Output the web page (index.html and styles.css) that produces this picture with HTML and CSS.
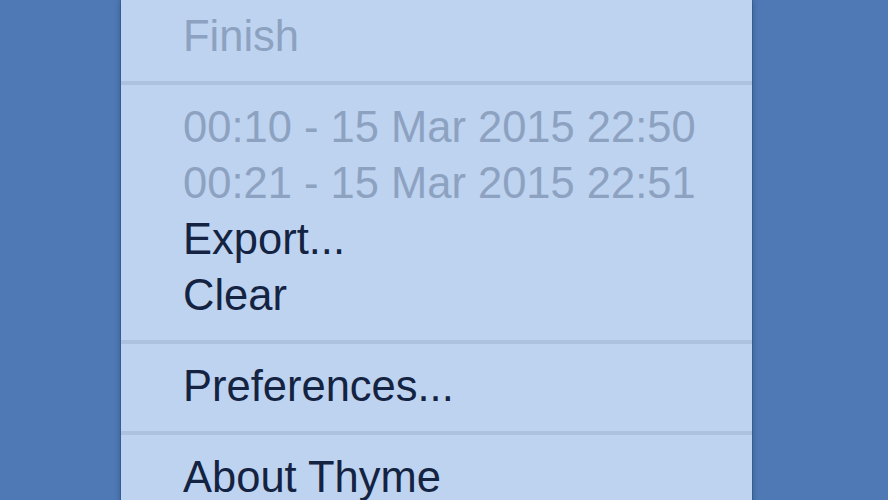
FILE: index.html
```html
<!DOCTYPE html>
<html>
<head>
<meta charset="utf-8">
<link rel="stylesheet" href="styles.css">
</head>
<body>
<div class="desktop">
  <div class="menu">
    <div class="item disabled">Finish</div>
    <div class="sep"></div>
    <div class="item disabled">00:10 - 15 Mar 2015 22:50</div>
    <div class="item disabled">00:21 - 15 Mar 2015 22:51</div>
    <div class="item">Export...</div>
    <div class="item">Clear</div>
    <div class="sep"></div>
    <div class="item">Preferences...</div>
    <div class="sep"></div>
    <div class="item">About Thyme</div>
  </div>
</div>
</body>
</html>
```
FILE: styles.css
```css
html, body {
  margin: 0;
  padding: 0;
  height: 100%;
  overflow: hidden;
  background: #4e79b5;
}
.desktop {
  display: flex;
  padding-left: 121px;
  height: 500px;
}
.menu {
  width: 631px;
  box-sizing: border-box;
  background: #bed3f0;
  padding: 8px 0 0 0;
  height: 520px;
  box-shadow: 0 0 0 1px rgba(40, 70, 120, 0.35), 0 0 6px rgba(20, 40, 80, 0.45);
  font-family: "Liberation Sans", Arial, sans-serif;
  font-size: 43.5px;
}
.item {
  height: 56px;
  line-height: 56px;
  padding-left: 62px;
  color: #142341;
  white-space: nowrap;
}
.item.disabled {
  color: #8da2c0;
}
.sep {
  height: 4px;
  background: #adc2df;
  margin: 17px 0 14px 0;
}
```
